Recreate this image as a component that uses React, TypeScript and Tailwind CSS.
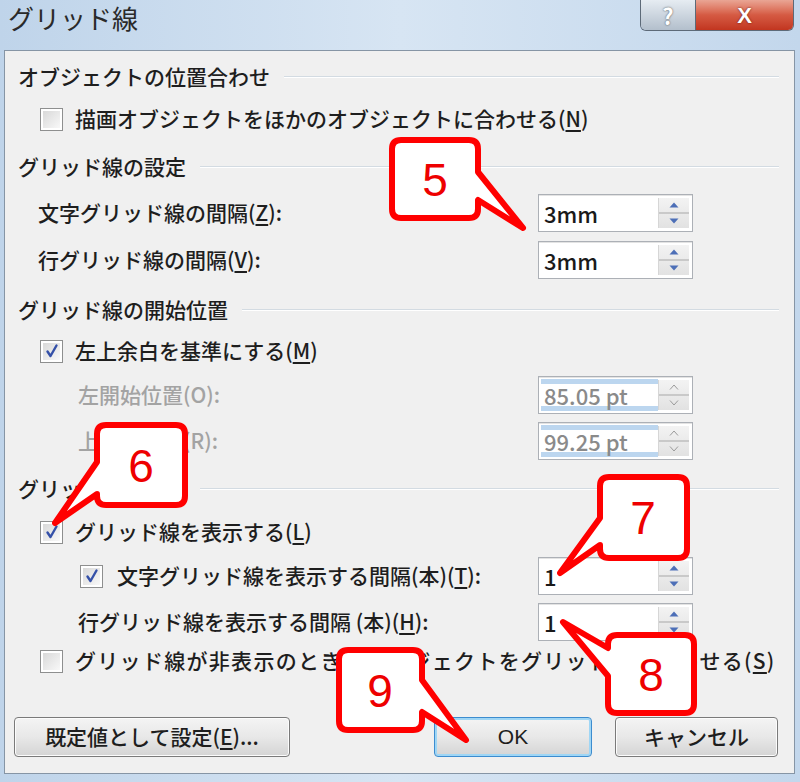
import React from 'react';

const FONT = { fontFamily: '"Noto Sans CJK JP", "Noto Sans", sans-serif' };

const Checkbox: React.FC<{ checked?: boolean }> = ({ checked }) => (
  <div className="w-[23px] h-[23px] border border-[#8e8f8f] bg-white p-[2px] shrink-0">
    <div className="w-full h-full bg-linear-to-br from-[#d9d9d9] to-[#f8f8f8] flex items-center justify-center">
      {checked && (
        <svg width="16" height="16" viewBox="0 0 16 16">
          <path d="M3.5 8.5 L6.5 13 L12.5 2.5" fill="none" stroke="#3450a8" strokeWidth="2.4" strokeLinejoin="round" strokeLinecap="round" />
        </svg>
      )}
    </div>
  </div>
);

const Spinner: React.FC<{ value: string; disabled?: boolean }> = ({ value, disabled }) => (
  <div className="flex h-[38px] w-[155px] border border-[#acb0b6] bg-white shadow-[inset_0_1px_0_#e3e3e3]">
    <div className={`relative flex-1 flex items-center pl-[5px] text-[22px] ${disabled ? 'text-[#8a8a8a]' : 'text-[#1a1a1a]'}`}>
      {disabled && (
        <>
          <div className="absolute left-[2px] right-0 top-[2px] h-[5px] bg-[#bcd6ef]" />
          <div className="absolute left-[2px] right-0 bottom-[2px] h-[5px] bg-[#bcd6ef]" />
        </>
      )}
      <span className="relative">{value}</span>
    </div>
    <div className="w-[31px] my-[3px] mr-[3px] flex flex-col bg-linear-to-b from-[#f3f3f3] to-[#e2e2e2] border-l border-[#d6d6d6]">
      <div className="flex-1 flex items-center justify-center border-b-2 border-[#c9c9c9]">
        <svg width="10" height="6" viewBox="0 0 10 6">
          {disabled ? (
            <path d="M1 5.5 L5 1 L9 5.5" fill="none" stroke="#9a9a9a" strokeWidth="1" />
          ) : (
            <path d="M0.5 5.5 L5 0.5 L9.5 5.5 Z" fill="#4d6fb7" />
          )}
        </svg>
      </div>
      <div className="flex-1 flex items-center justify-center">
        <svg width="10" height="6" viewBox="0 0 10 6">
          {disabled ? (
            <path d="M1 0.5 L5 5 L9 0.5" fill="none" stroke="#9a9a9a" strokeWidth="1" />
          ) : (
            <path d="M0.5 0.5 L5 5.5 L9.5 0.5 Z" fill="#4d6fb7" />
          )}
        </svg>
      </div>
    </div>
  </div>
);

const GroupHeader: React.FC<{ label: string; mt: string }> = ({ label, mt }) => (
  <div className={`flex items-center h-[40px] pl-[13px] pr-[15px] gap-[14px] ${mt}`}>
    <span className="text-[21px] text-[#1e1e1e] whitespace-nowrap">{label}</span>
    <div className="flex-1 h-[2px] border-t border-[#d3dbe2] border-b border-b-white" />
  </div>
);

const Key: React.FC<{ k: string }> = ({ k }) => (
  <span>
    (<span className="underline underline-offset-[3px]">{k}</span>)
  </span>
);

const WinButton: React.FC<{ label: React.ReactNode; width: string; focused?: boolean; className?: string }> = ({ label, width, focused, className }) => (
  <div
    className={`${width} ${className ?? ''} h-[40px] rounded-[4px] border ${
      focused ? 'border-[#3c8ccf] shadow-[inset_0_0_0_2px_#9fd6f5]' : 'border-[#7a7a7a] shadow-[inset_0_0_0_1px_#fcfcfc]'
    } bg-linear-to-b from-[#f4f4f4] via-[#e8e8e8] to-[#d4d4d4] flex items-center justify-center text-[21px] text-[#1e1e1e]`}
  >
    {label}
  </div>
);

export default function App() {
  return (
    <div className="relative w-[800px] h-[782px] overflow-hidden bg-linear-to-r from-[#bfd4ea] via-[#d7e5f3] to-[#c3d7ec] font-medium" style={FONT}>
      {/* title bar */}
      <div className="flex items-start justify-between h-[50px]">
        <div className="pl-[8px] pt-[1px] text-[26px] leading-[34px] text-[#2a2a2a] font-normal">グリッド線</div>
        <div className="flex mr-[6px] border border-t-0 border-[#5d6a78] rounded-b-[6px] overflow-hidden h-[31px]">
          <div className="w-[55px] bg-linear-to-b from-[#e6ecf2] to-[#b3bfcc] flex items-center justify-center border-r border-[#5d6a78] text-[22px] font-bold text-white [text-shadow:0_0_2px_#444]">
            ?
          </div>
          <div className="w-[97px] bg-linear-to-b from-[#e9a594] via-[#d55a43] to-[#c2351f] flex items-center justify-center text-[22px] font-bold text-white [text-shadow:0_0_2px_#5a1208]" style={{ fontFamily: '"Liberation Sans", sans-serif' }}>
            X
          </div>
        </div>
      </div>

      {/* content panel */}
      <div className="ml-[4px] mr-[5px] h-[724px] border border-[#8695a5] bg-[#f0f0f0] flex flex-col pt-[6px]">
        <GroupHeader label="オブジェクトの位置合わせ" mt="" />
        <div className="flex items-center h-[40px] mt-[2px] pl-[35px] gap-[12px] text-[21px] text-[#1e1e1e]">
          <Checkbox />
          <span>描画オブジェクトをほかのオブジェクトに合わせる<Key k="N" /></span>
        </div>

        <GroupHeader label="グリッド線の設定" mt="mt-[8px]" />
        <div className="flex items-center mt-[7px] pl-[33px] pr-[101px] text-[21px] text-[#1e1e1e]">
          <span className="flex-1">文字グリッド線の間隔<Key k="Z" />:</span>
          <Spinner value="3mm" />
        </div>
        <div className="flex items-center mt-[9px] pl-[33px] pr-[101px] text-[21px] text-[#1e1e1e]">
          <span className="flex-1">行グリッド線の間隔<Key k="V" />:</span>
          <Spinner value="3mm" />
        </div>

        <GroupHeader label="グリッド線の開始位置" mt="mt-[11px]" />
        <div className="flex items-center h-[40px] mt-[1px] pl-[35px] gap-[12px] text-[21px] text-[#1e1e1e]">
          <Checkbox checked />
          <span>左上余白を基準にする<Key k="M" /></span>
        </div>
        <div className="flex items-center mt-[5px] pl-[73px] pr-[101px] text-[21px] text-[#a3a3a3]">
          <span className="flex-1">左開始位置(O):</span>
          <Spinner value="85.05 pt" disabled />
        </div>
        <div className="flex items-center mt-[8px] pl-[73px] pr-[101px] text-[21px] text-[#a3a3a3]">
          <span className="flex-1">上開始位置(R):</span>
          <Spinner value="99.25 pt" disabled />
        </div>

        <GroupHeader label="グリッド線の表示" mt="mt-[9px]" />
        <div className="flex items-center h-[40px] mt-[3px] pl-[35px] gap-[12px] text-[21px] text-[#1e1e1e]">
          <Checkbox checked />
          <span>グリッド線を表示する<Key k="L" /></span>
        </div>
        <div className="flex items-center mt-[5px] pl-[75px] pr-[101px] text-[21px] text-[#1e1e1e]">
          <div className="flex-1 flex items-center gap-[14px]">
            <Checkbox checked />
            <span>文字グリッド線を表示する間隔(本)<Key k="T" />:</span>
          </div>
          <Spinner value="1" />
        </div>
        <div className="flex items-center mt-[8px] pl-[73px] pr-[101px] text-[21px] text-[#1e1e1e]">
          <span className="flex-1">行グリッド線を表示する間隔 (本)<Key k="H" />:</span>
          <Spinner value="1" />
        </div>
        <div className="flex items-center h-[40px] pl-[35px] gap-[12px] text-[21px] text-[#1e1e1e]">
          <Checkbox />
          <span className="whitespace-nowrap tracking-[1.3px]">グリッド線が非表示のときにオブジェクトをグリッド線に合わせる<Key k="S" /></span>
        </div>

        <div className="flex items-center mt-[36px] pl-[9px]">
          <WinButton width="w-[276px]" label={<span>既定値として設定<Key k="E" />...</span>} />
          <WinButton width="w-[158px]" className="ml-[144px]" focused label={<span style={{ fontFamily: '"Liberation Sans", sans-serif' }}>OK</span>} />
          <WinButton width="w-[163px]" className="ml-[23px]" label="キャンセル" />
        </div>
      </div>

      {/* callouts */}
      <svg className="absolute inset-0 pointer-events-none" width="800" height="782" viewBox="0 0 800 782">
        <g fill="#ffffff" stroke="#ff0000" strokeWidth="6" strokeLinejoin="round">
          <path d="M401,140 H469 Q478,140 478,149 V172 L523,228 L478,200 V209 Q478,218 469,218 H401 Q392,218 392,209 V149 Q392,140 401,140 Z" />
          <path d="M106,425 H176 Q185,425 185,434 V496 Q185,505 176,505 H106 Q97,505 97,496 V494 L55,523 L97,462 V434 Q97,425 106,425 Z" />
          <path d="M609,477 H678 Q687,477 687,486 V549 Q687,558 678,558 H609 Q600,558 600,549 V545 L560,573 L600,518 V486 Q600,477 609,477 Z" />
          <path d="M617,635 H685 Q694,635 694,644 V704 Q694,713 685,713 H617 Q608,713 608,704 V676 L563,622 L608,648 V644 Q608,635 617,635 Z" />
          <path d="M348,650 H413 Q422,650 422,659 V680 L466,740 L422,712 V721 Q422,730 413,730 H348 Q339,730 339,721 V659 Q339,650 348,650 Z" />
        </g>
        <g fill="#ee0000" fontSize="46" fontWeight="400" textAnchor="middle" dominantBaseline="central" style={{ fontFamily: '"Liberation Sans", Arial, sans-serif' }}>
          <text x="435" y="180">5</text>
          <text x="141" y="466">6</text>
          <text x="643" y="518">7</text>
          <text x="651" y="675">8</text>
          <text x="380" y="691">9</text>
        </g>
      </svg>
    </div>
  );
}
